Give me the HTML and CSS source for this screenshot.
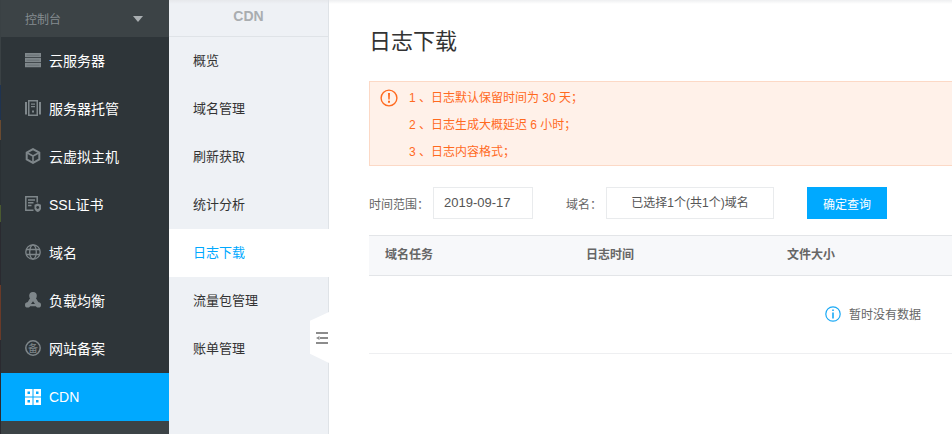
FILE: index.html
```html
<!DOCTYPE html>
<html lang="zh-CN">
<head>
    <meta charset="UTF-8">
    <title>日志下载</title>
    <link rel="stylesheet" href="styles.css">
</head>
<body>
    <div class="layout">
        <div class="edge"></div>
        <div class="sidebar">
            <div class="console">
                <span>控制台</span>
                <div class="arrow"></div>
            </div>
            <div class="side-item">
                <svg class="side-icon" viewBox="0 0 16 16"><path d="M0 1h16v4.300H0zM0 6h16v4.300H0zM0 11h16v4.300H0z"/><path d="M1.500 2.400h13v1.500h-13zM1.500 7.400h13v1.500h-13zM1.500 12.400h13v1.500h-13z" fill="#70787c"/></svg>
                <span>云服务器</span>
            </div>
            <div class="side-item">
                <svg class="side-icon" viewBox="0 0 16 16"><path d="M0 2h2v12.500H0zM14 2h2v12.500h-2zM3 0h10v16H3zM4.500 1.500v13h7v-13zM6 3.500h4v1.200H6zM6 6h4v1.200H6zM7 10.500h2v2H7z" fill-rule="evenodd"/></svg>
                <span>服务器托管</span>
            </div>
            <div class="side-item">
                <svg class="side-icon" viewBox="0 0 16 16"><path d="M8 1.100l6.300 3.500v6.800L8 14.900l-6.300-3.500V4.600z" fill="none" stroke="#7f878b" stroke-width="2"/><path d="M2 4.800L8 8l6-3.200M8 8v6.500" fill="none" stroke="#7f878b" stroke-width="1.600"/></svg>
                <span>云虚拟主机</span>
            </div>
            <div class="side-item">
                <svg class="side-icon" viewBox="0 0 16 16"><path d="M8.500 14.300H.8V.8h11.400v5.700M3 4h7M3 6.800h5.500M3 9.600h3.500" fill="none" stroke="#7f878b" stroke-width="1.500"/><path d="M9.500 8.800l3.200-1.300L16 8.800v3.400c0 1.900-1.500 3-3.300 3.800-1.700-.8-3.200-1.900-3.200-3.800z" fill="#7f878b"/><circle cx="12.700" cy="11.500" r="1.400" fill="#2e3539"/></svg>
                <span>SSL证书</span>
            </div>
            <div class="side-item">
                <svg class="side-icon" viewBox="0 0 16 16"><g fill="none" stroke="#7f878b" stroke-width="1.300"><circle cx="8" cy="8" r="7.200"/><ellipse cx="8" cy="8" rx="3.300" ry="7.200"/><path d="M1.200 5.500h13.600M1.200 10.500h13.600"/></g></svg>
                <span>域名</span>
            </div>
            <div class="side-item">
                <svg class="side-icon" viewBox="0 0 16 16"><circle cx="8" cy="3.800" r="3.800"/><circle cx="2.600" cy="12.900" r="2.600"/><circle cx="13.400" cy="12.900" r="2.600"/><path d="M5.500 5.500L1.800 11.500l2.500 2.800h7.400l2.500-2.800-3.700-6zM8 9.300l2 2.800H6z" fill-rule="evenodd"/></svg>
                <span>负载均衡</span>
            </div>
            <div class="side-item">
                <svg class="side-icon" viewBox="0 0 16 16"><circle cx="8" cy="8" r="7.200" fill="none" stroke="#7f878b" stroke-width="1.500"/><text class="icp-mark" x="8" y="11.800" text-anchor="middle">备</text></svg>
                <span>网站备案</span>
            </div>
            <div class="side-item active">
                <svg class="side-icon" viewBox="0 0 16 16"><path d="M0 0h7.500v7.500H0zM2.500 2.500v2.500h2.500V2.500zM8.500 0H16v7.500H8.500zM11 2.500v2.500h2.500V2.500zM0 8.500h7.500V16H0zM2.500 11v2.500h2.500V11zM8.500 8.500H16V16H8.500zM11 11v2.500h2.500V11z" fill-rule="evenodd"/></svg>
                <span>CDN</span>
            </div>
            <div class="side-foot"></div>
        </div>
        <div class="subnav">
            <div class="subnav-title">CDN</div>
            <div class="subnav-item">概览</div>
            <div class="subnav-item">域名管理</div>
            <div class="subnav-item">刷新获取</div>
            <div class="subnav-item">统计分析</div>
            <div class="subnav-item current">日志下载</div>
            <div class="subnav-item">流量包管理</div>
            <div class="subnav-item">账单管理</div>
            <div class="collapse">
                <svg viewBox="0 0 12 12"><path d="M0 0h12v2H0zM4 5h8v2H4zM0 10h12v2H0zM0 6l3.500-2v4z" fill="#8c8c8c"/></svg>
            </div>
        </div>
        <div class="main">
            <h1>日志下载</h1>
            <div class="notice">
                <svg class="notice-icon" viewBox="0 0 18 18"><circle cx="9" cy="9" r="7.900" fill="none" stroke="#ff6a1f" stroke-width="1.400"/><path d="M8 4h2l-.3 6.500H8.300zM8 11.800h2v2H8z" fill="#ff6a1f"/></svg>
                <div class="notice-lines">
                    <p>1 、日志默认保留时间为 30 天；</p>
                    <p>2 、日志生成大概延迟 6 小时；</p>
                    <p>3 、日志内容格式；</p>
                </div>
            </div>
            <div class="filters">
                <span class="filter-label">时间范围：</span>
                <div class="field date-field">2019-09-17</div>
                <span class="filter-label domain-label">域名：</span>
                <div class="field domain-field">已选择1个(共1个)域名</div>
                <button class="query">确定查询</button>
            </div>
            <div class="table-head">
                <div class="col">域名任务</div>
                <div class="col">日志时间</div>
                <div class="col">文件大小</div>
            </div>
            <div class="empty">
                <svg class="empty-icon" viewBox="0 0 16 16"><circle cx="8" cy="8" r="7.200" fill="none" stroke="#1aa9f5" stroke-width="1.200"/><path d="M7.200 3.500h1.600v1.600H7.200zM7.200 6.500h1.600v6H7.200z" fill="#1aa9f5"/></svg>
                <span>暂时没有数据</span>
            </div>
        </div>
    </div>
</body>
</html>
```

FILE: styles.css
```css
html, body {
    height: 100%;
    margin: 0;
}

body {
    font-family: "Liberation Sans", "Noto Sans CJK SC", sans-serif;
    font-size: 13px;
    background-color: #fff;
    overflow: hidden;
}

.layout {
    display: flex;
    height: 434px;
}

.edge {
    width: 1px;
    background: linear-gradient(#3a4144 0 85px, #1f3350 85px 120px, #6a4a30 120px 140px, #2a3034 140px 205px, #4a5a30 205px 222px, #2a2a30 222px 285px, #6a3a28 285px 340px, #2a2a30 340px 434px);
}

.sidebar {
    width: 168px;
    display: flex;
    flex-direction: column;
    background-color: #2e3539;
    color: #fff;
}

.console {
    height: 37px;
    display: flex;
    align-items: center;
    justify-content: space-between;
    padding: 0 26px 0 24px;
    background-color: #3c4346;
    color: #858c90;
    font-size: 12px;
}

.arrow {
    width: 0;
    height: 0;
    border-left: 5px solid transparent;
    border-right: 5px solid transparent;
    border-top: 6px solid #a9aeb1;
}

.side-item {
    box-sizing: border-box;
    height: 48px;
    display: flex;
    align-items: center;
    gap: 8px;
    padding: 0 0 2px 24px;
    font-size: 14px;
}

.side-icon {
    width: 16px;
    height: 16px;
    fill: #7f878b;
}

.icp-mark {
    font-size: 10px;
}

.side-item.active {
    padding-bottom: 0;
    background-color: #00a9ff;
}

.side-item.active .side-icon {
    fill: #fff;
}

.side-foot {
    flex: 1;
    background-color: #3c4346;
}

.subnav {
    position: relative;
    width: 159px;
    background-color: #eef1f5;
    background-image: linear-gradient(#e6e8eb, #eef1f5 4px);
    border-right: 1px solid #dfe3e7;
    font-size: 13px;
    color: #333;
}

.subnav-title {
    height: 36px;
    line-height: 33px;
    border-bottom: 1px solid #dfe3e7;
    text-align: center;
    color: #a9adb0;
    font-size: 14px;
    font-weight: bold;
}

.subnav-item {
    height: 48px;
    line-height: 48px;
    padding-left: 24px;
}

.subnav-item.current {
    background-color: #fff;
    color: #00a9ff;
    margin-right: -1px;
}

.collapse {
    position: absolute;
    top: 312px;
    right: -1px;
    width: 19px;
    height: 51px;
    background-color: #fff;
    clip-path: polygon(100% 0, 100% 100%, 0 82%, 0 17%);
    display: flex;
    align-items: center;
    justify-content: flex-end;
}

.collapse svg {
    width: 12px;
    height: 12px;
    margin-right: 1px;
}

.main {
    flex: 1;
    min-width: 0;
    padding: 1px 0 0 40px;
    background-image: linear-gradient(#eeeff1, #fff 4px);
}

h1 {
    margin: 26px 0 0;
    height: 30px;
    line-height: 30px;
    font-size: 22px;
    font-weight: normal;
    color: #333;
}

.notice {
    display: flex;
    margin-top: 24px;
    height: 83px;
    background-color: #fff1e9;
    border: 1px solid #fcd9c6;
    border-right: none;
    color: #ff6a1f;
    font-size: 12px;
}

.notice-icon {
    width: 18px;
    height: 18px;
    margin: 7px 0 0 10px;
}

.notice-lines {
    margin-left: 11px;
    padding-top: 3px;
}

.notice-lines p {
    margin: 0;
    height: 27px;
    line-height: 27px;
}

.filters {
    display: flex;
    align-items: center;
    margin-top: 21px;
    height: 32px;
    color: #666;
    font-size: 12px;
}

.filter-label {
    width: 64px;
}

.field {
    box-sizing: border-box;
    height: 32px;
    line-height: 30px;
    border: 1px solid #e9ebed;
    color: #555;
}

.date-field {
    width: 100px;
    padding-left: 10px;
    font-size: 13px;
}

.domain-label {
    width: 40px;
    margin-left: 33px;
}

.domain-field {
    width: 168px;
    text-align: center;
}

.query {
    width: 80px;
    height: 32px;
    margin-left: 33px;
    border: none;
    background-color: #00a9ff;
    color: #fff;
    font-family: inherit;
    font-size: 12px;
}

.table-head {
    display: flex;
    box-sizing: border-box;
    height: 41px;
    margin-top: 16px;
    padding-left: 16px;
    background-color: #f7f8fa;
    border-top: 1px solid #e3e5e8;
    border-bottom: 1px solid #e3e5e8;
    font-size: 12px;
    font-weight: bold;
    color: #666;
    line-height: 39px;
}

.col {
    flex: none;
    width: 201px;
}

.empty {
    display: flex;
    align-items: center;
    justify-content: flex-end;
    gap: 8px;
    box-sizing: border-box;
    height: 78px;
    padding: 0 31px 2px 0;
    border-bottom: 1px solid #eeeff1;
    color: #666;
    font-size: 12px;
}

.empty-icon {
    width: 16px;
    height: 16px;
}
```
